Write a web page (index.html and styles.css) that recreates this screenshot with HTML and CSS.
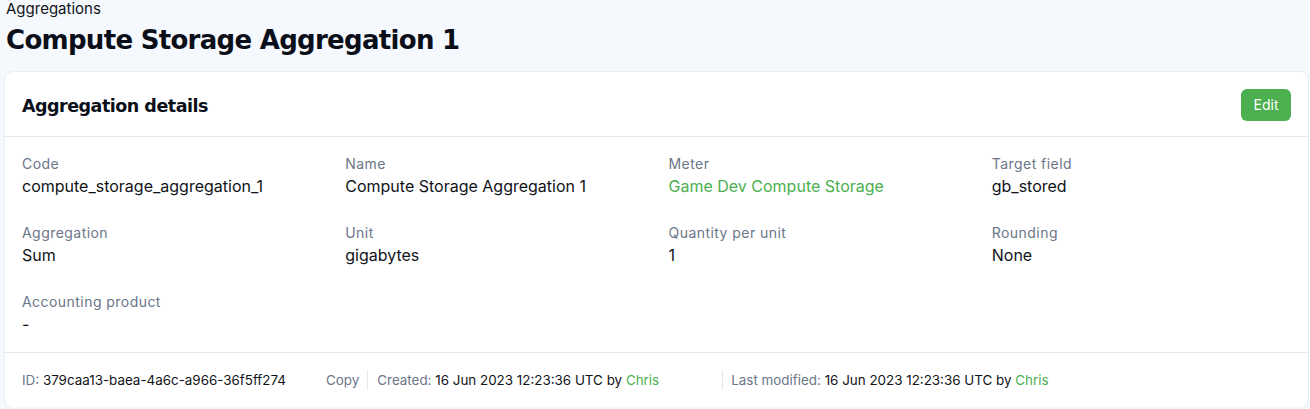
FILE: index.html
```html
<!DOCTYPE html>
<html>
<head>
<meta charset="utf-8">
<link rel="stylesheet" href="styles.css">
</head>
<body>
<div class="page">
  <div class="crumb">Aggregations</div>
  <h1 class="title">Compute Storage Aggregation 1</h1>
  <div class="card">
    <div class="card-head">
      <h2 class="card-title">Aggregation details</h2>
      <button class="btn-edit">Edit</button>
    </div>
    <div class="grid">
      <div class="field"><div class="label">Code</div><div class="value">compute_storage_aggregation_1</div></div>
      <div class="field"><div class="label">Name</div><div class="value">Compute Storage Aggregation 1</div></div>
      <div class="field"><div class="label">Meter</div><div class="value link">Game Dev Compute Storage</div></div>
      <div class="field"><div class="label">Target field</div><div class="value">gb_stored</div></div>
      <div class="field"><div class="label">Aggregation</div><div class="value">Sum</div></div>
      <div class="field"><div class="label">Unit</div><div class="value">gigabytes</div></div>
      <div class="field"><div class="label">Quantity per unit</div><div class="value">1</div></div>
      <div class="field"><div class="label">Rounding</div><div class="value">None</div></div>
      <div class="field"><div class="label">Accounting product</div><div class="value">-</div></div>
    </div>
    <div class="card-foot">
      <div class="foot-id"><span class="muted">ID:</span> 379caa13-baea-4a6c-a966-36f5ff274</div>
      <div class="foot-copy muted">Copy</div>
      <div class="foot-created"><span class="muted">Created:</span> 16 Jun 2023 12:23:36 UTC by <span class="link">Chris</span></div>
      <div class="foot-mod"><span class="muted">Last modified:</span> 16 Jun 2023 12:23:36 UTC by <span class="link">Chris</span></div>
    </div>
  </div>
</div>
</body>
</html>
```

FILE: styles.css
```css
html, body {
  margin: 0;
  padding: 0;
  background: #f5f8fc;
}
body {
  font-family: "Inter", "Noto Sans", sans-serif;
  color: #111318;
}
.page {
  padding: 0 2px 0 5px;
}
.crumb {
  font-size: 15px;
  line-height: 18px;
  padding: 0 0 0 1px;
  color: #111318;
}
.title {
  margin: 4px 0 0 1px;
  font-family: "DejaVu Sans", sans-serif;
  font-weight: bold;
  font-size: 26px;
  line-height: 36px;
  letter-spacing: -0.7px;
  color: #0b0f19;
}
.card {
  margin-top: 14px;
  background: #fff;
  border-radius: 8px;
  box-shadow: 0 0 0 1px #e8edf3, 0 1px 2px rgba(0,0,0,0.06);
}
.card-head {
  display: flex;
  align-items: center;
  justify-content: space-between;
  height: 64px;
  padding: 0 17px;
  border-bottom: 1px solid #e2e8f0;
}
.card-title {
  margin: 4px 0 0;
  font-family: "DejaVu Sans", sans-serif;
  font-weight: bold;
  font-size: 17.5px;
  letter-spacing: -0.5px;
  color: #0b0f19;
}
.btn-edit {
  background: #4caf50;
  color: #fff;
  border: none;
  border-radius: 6px;
  font-family: "Inter", sans-serif;
  font-size: 14px;
  width: 50px;
  height: 32px;
  padding: 0;
  margin-top: 1px;
}
.grid {
  display: grid;
  grid-template-columns: repeat(4, 1fr);
  column-gap: 24px;
  row-gap: 27px;
  padding: 18px 17px 17px;
}
.label {
  font-size: 14px;
  line-height: 18px;
  letter-spacing: 0.45px;
  color: #6b7689;
}
.value {
  font-size: 16px;
  line-height: 22px;
  margin-top: 2px;
  color: #111318;
}
.link {
  color: #4caf50;
}
.card-foot {
  display: flex;
  align-items: center;
  height: 54px;
  padding: 0 17px;
  border-top: 1px solid #e2e8f0;
  font-size: 13.4px;
  color: #111318;
}
.muted {
  color: #6b7689;
}
.foot-id {
  width: 304px;
}
.foot-copy {
  padding-right: 8px;
  border-right: 1px solid #e2e8f0;
  line-height: 20px;
}
.foot-created {
  padding-left: 9px;
  width: 345px;
  border-right: 1px solid #e2e8f0;
  line-height: 20px;
}
.foot-mod {
  padding-left: 8px;
  line-height: 20px;
}
```
